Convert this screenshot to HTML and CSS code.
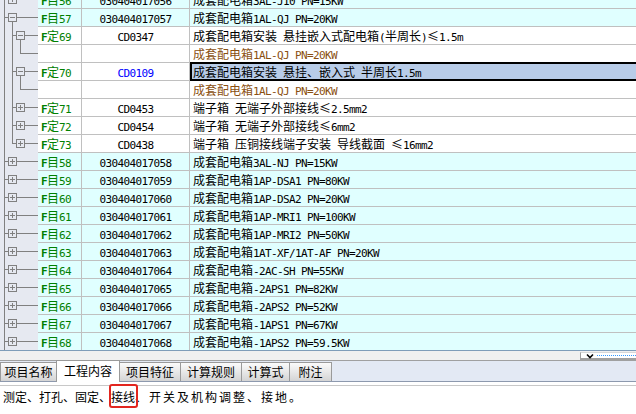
FILE: index.html
```html
<!DOCTYPE html>
<html>
<head>
<meta charset="utf-8">
<link rel="stylesheet" href="styles.css">
</head>
<body>
<svg class="defs" width="0" height="0" aria-hidden="true">
  <defs>
    <symbol id="tA" viewBox="0 0 38 18"><rect x="8.5" y="4.5" width="8" height="8"/><path d="M4.5 0V18M4.5 8.5H8.5M16.5 8.5H38M10 8.5H15M12.5 6V11"/></symbol>
    <symbol id="tB" viewBox="0 0 38 18"><rect x="8.5" y="4.5" width="8" height="8"/><path d="M4.5 0V18M4.5 8.5H8.5M16.5 8.5H38M10 8.5H15M12.5 12.5V18"/></symbol>
    <symbol id="tC" viewBox="0 0 38 18"><rect x="16.5" y="4.5" width="8" height="8"/><path d="M4.5 0V18M12.5 0V18M12.5 8.5H16.5M24.5 8.5H38M18 8.5H23M20.5 12.5V18"/></symbol>
    <symbol id="tD" viewBox="0 0 38 18"><path d="M4.5 0V18M12.5 0V18M20.5 0V8.5H38"/></symbol>
    <symbol id="tE" viewBox="0 0 38 18"><rect x="16.5" y="4.5" width="8" height="8"/><path d="M4.5 0V18M12.5 0V18M12.5 8.5H16.5M24.5 8.5H38M18 8.5H23M20.5 6V11"/></symbol>
    <symbol id="tF" viewBox="0 0 38 18"><rect x="16.5" y="4.5" width="8" height="8"/><path d="M4.5 0V18M12.5 0V8.5H16.5M24.5 8.5H38M18 8.5H23M20.5 6V11"/></symbol>
  </defs>
</svg>

<div class="grid">
  <div class="rows">
    <div class="row main">
      <div class="tree"><svg><use href="#tA"/></svg></div>
      <div class="c lbl"><span class="a b">F</span>目<span class="a">56</span></div>
      <div class="c num"><span class="a">030404017056</span></div>
      <div class="c desc">成套配电箱<span class="a">3AL-J10 PN=15KW</span></div>
    </div>
    <div class="row main">
      <div class="tree"><svg><use href="#tB"/></svg></div>
      <div class="c lbl"><span class="a b">F</span>目<span class="a">57</span></div>
      <div class="c num"><span class="a">030404017057</span></div>
      <div class="c desc">成套配电箱<span class="a">1AL-QJ PN=20KW</span></div>
    </div>
    <div class="row">
      <div class="tree"><svg><use href="#tC"/></svg></div>
      <div class="c lbl"><span class="a b">F</span>定<span class="a">69</span></div>
      <div class="c num"><span class="a">CD0347</span></div>
      <div class="c desc">成套配电箱安装<span class="a"> </span>悬挂嵌入式配电箱<span class="a">(</span>半周长<span class="a">)</span><span class="le">≤</span><span class="a">1.5m</span></div>
    </div>
    <div class="row">
      <div class="tree"><svg><use href="#tD"/></svg></div>
      <div class="c lbl"></div>
      <div class="c num"></div>
      <div class="c desc sub">成套配电箱<span class="a">1AL-QJ PN=20KW</span></div>
    </div>
    <div class="row">
      <div class="tree"><svg><use href="#tC"/></svg></div>
      <div class="c lbl"><span class="a b">F</span>定<span class="a">70</span></div>
      <div class="c num blue"><span class="a">CD0109</span></div>
      <div class="c desc sel">成套配电箱安装<span class="a"> </span>悬挂、嵌入式<span class="a"> </span>半周长<span class="a">1.5m</span></div>
    </div>
    <div class="row">
      <div class="tree"><svg><use href="#tD"/></svg></div>
      <div class="c lbl"></div>
      <div class="c num"></div>
      <div class="c desc sub">成套配电箱<span class="a">1AL-QJ PN=20KW</span></div>
    </div>
    <div class="row">
      <div class="tree"><svg><use href="#tE"/></svg></div>
      <div class="c lbl"><span class="a b">F</span>定<span class="a">71</span></div>
      <div class="c num"><span class="a">CD0453</span></div>
      <div class="c desc">端子箱<span class="a"> </span>无端子外部接线<span class="le">≤</span><span class="a">2.5mm2</span></div>
    </div>
    <div class="row">
      <div class="tree"><svg><use href="#tE"/></svg></div>
      <div class="c lbl"><span class="a b">F</span>定<span class="a">72</span></div>
      <div class="c num"><span class="a">CD0454</span></div>
      <div class="c desc">端子箱<span class="a"> </span>无端子外部接线<span class="le">≤</span><span class="a">6mm2</span></div>
    </div>
    <div class="row">
      <div class="tree"><svg><use href="#tF"/></svg></div>
      <div class="c lbl"><span class="a b">F</span>定<span class="a">73</span></div>
      <div class="c num"><span class="a">CD0438</span></div>
      <div class="c desc">端子箱<span class="a"> </span>压铜接线端子安装<span class="a"> </span>导线截面<span class="a"> </span><span class="le">≤</span><span class="a">16mm2</span></div>
    </div>
    <div class="row main">
      <div class="tree"><svg><use href="#tA"/></svg></div>
      <div class="c lbl"><span class="a b">F</span>目<span class="a">58</span></div>
      <div class="c num"><span class="a">030404017058</span></div>
      <div class="c desc">成套配电箱<span class="a">3AL-NJ PN=15KW</span></div>
    </div>
    <div class="row main">
      <div class="tree"><svg><use href="#tA"/></svg></div>
      <div class="c lbl"><span class="a b">F</span>目<span class="a">59</span></div>
      <div class="c num"><span class="a">030404017059</span></div>
      <div class="c desc">成套配电箱<span class="a">1AP-DSA1 PN=80KW</span></div>
    </div>
    <div class="row main">
      <div class="tree"><svg><use href="#tA"/></svg></div>
      <div class="c lbl"><span class="a b">F</span>目<span class="a">60</span></div>
      <div class="c num"><span class="a">030404017060</span></div>
      <div class="c desc">成套配电箱<span class="a">1AP-DSA2 PN=20KW</span></div>
    </div>
    <div class="row main">
      <div class="tree"><svg><use href="#tA"/></svg></div>
      <div class="c lbl"><span class="a b">F</span>目<span class="a">61</span></div>
      <div class="c num"><span class="a">030404017061</span></div>
      <div class="c desc">成套配电箱<span class="a">1AP-MRI1 PN=100KW</span></div>
    </div>
    <div class="row main">
      <div class="tree"><svg><use href="#tA"/></svg></div>
      <div class="c lbl"><span class="a b">F</span>目<span class="a">62</span></div>
      <div class="c num"><span class="a">030404017062</span></div>
      <div class="c desc">成套配电箱<span class="a">1AP-MRI2 PN=50KW</span></div>
    </div>
    <div class="row main">
      <div class="tree"><svg><use href="#tA"/></svg></div>
      <div class="c lbl"><span class="a b">F</span>目<span class="a">63</span></div>
      <div class="c num"><span class="a">030404017063</span></div>
      <div class="c desc">成套配电箱<span class="a">1AT-XF/1AT-AF PN=20KW</span></div>
    </div>
    <div class="row main">
      <div class="tree"><svg><use href="#tA"/></svg></div>
      <div class="c lbl"><span class="a b">F</span>目<span class="a">64</span></div>
      <div class="c num"><span class="a">030404017064</span></div>
      <div class="c desc">成套配电箱<span class="a">-2AC-SH PN=55KW</span></div>
    </div>
    <div class="row main">
      <div class="tree"><svg><use href="#tA"/></svg></div>
      <div class="c lbl"><span class="a b">F</span>目<span class="a">65</span></div>
      <div class="c num"><span class="a">030404017065</span></div>
      <div class="c desc">成套配电箱<span class="a">-2APS1 PN=82KW</span></div>
    </div>
    <div class="row main">
      <div class="tree"><svg><use href="#tA"/></svg></div>
      <div class="c lbl"><span class="a b">F</span>目<span class="a">66</span></div>
      <div class="c num"><span class="a">030404017066</span></div>
      <div class="c desc">成套配电箱<span class="a">-2APS2 PN=52KW</span></div>
    </div>
    <div class="row main">
      <div class="tree"><svg><use href="#tA"/></svg></div>
      <div class="c lbl"><span class="a b">F</span>目<span class="a">67</span></div>
      <div class="c num"><span class="a">030404017067</span></div>
      <div class="c desc">成套配电箱<span class="a">-1APS1 PN=67KW</span></div>
    </div>
    <div class="row main">
      <div class="tree"><svg><use href="#tA"/></svg></div>
      <div class="c lbl"><span class="a b">F</span>目<span class="a">68</span></div>
      <div class="c num"><span class="a">030404017068</span></div>
      <div class="c desc">成套配电箱<span class="a">-1APS2 PN=59.5KW</span></div>
    </div>
  </div>
</div>

<div class="hbar">
  <div class="hscroll">
    <svg class="chev" width="8" height="6" viewBox="0 0 8 6"><path d="M1 1.5L4 4.5L7 1.5"/></svg>
    <div class="dots"></div>
  </div>
</div>

<div class="tabbar">
  <div class="tab w57">项目名称</div>
  <div class="tab on w63">工程内容</div>
  <div class="tab w61">项目特征</div>
  <div class="tab w61">计算规则</div>
  <div class="tab w48">计算式</div>
  <div class="tab w42">附注</div>
</div>

<div class="content">测定、打孔、固定、<span class="mark">接线</span><span class="tail">、开关及机构调整、接地。</span></div>
</body>
</html>
```

FILE: styles.css
```css
* { box-sizing: border-box; }
html, body { margin: 0; padding: 0; }
body {
  width: 636px;
  height: 414px;
  overflow: hidden;
  background: #ffffff;
  color: #000000;
  font-family: "Noto Sans CJK SC", "Liberation Sans", sans-serif;
  font-size: 12px;
}
.defs { position: absolute; width: 0; height: 0; overflow: hidden; }
.defs symbol rect { fill: #e6e9f1; stroke: #808080; stroke-width: 1; }
.defs symbol path { fill: none; stroke: #808080; stroke-width: 1; }

.grid {
  height: 351px;
  border-bottom: 1px solid #7f9db9;
  overflow: hidden;
}
.rows { margin-top: -9px; }
.row {
  display: grid;
  grid-template-columns: 38px 44px 108px 1fr;
  height: 18px;
}
.tree { background: #e6e9f1; height: 18px; }
.tree svg { display: block; width: 38px; height: 18px; shape-rendering: crispEdges; }
.c {
  height: 18px;
  border-bottom: 1px solid #c0c0c0;
  line-height: 17px;
  white-space: nowrap;
  overflow: hidden;
  background: #ffffff;
}
.main .c { background: #e0ffff; }
.lbl { border-right: 1px solid #c0c0c0; padding-left: 3px; color: #008000; }
.num { border-right: 1px solid #c0c0c0; text-align: center; }
.desc { padding-left: 3px; }
.a {
  font-family: "DejaVu Sans Mono", "Liberation Mono", monospace;
  font-size: 11px;
  letter-spacing: -0.62px;
  white-space: pre;
}
.b { font-weight: bold; }
.le { display: inline-block; width: 12px; text-align: center; }
.sub { color: #8a4f10; }
.blue { color: #0000ff; }
.c.sel { position: relative; background: #b8cce8; overflow: visible; }
.sel::after {
  content: "";
  position: absolute;
  left: 0; right: -2px; top: -1px; bottom: -1px;
  border: 2px solid #000000;
}

.hbar {
  height: 9px;
  background: #f0f0f0;
  display: flex;
  justify-content: flex-end;
}
.hscroll {
  width: 56px;
  height: 8px;
  margin-top: 1px;
  background: #ffffff;
  border-left: 1px solid #a0a0a0;
  border-top: 1px solid #d8d8d8;
  border-bottom: 2px solid #a0a0a0;
  display: flex;
  align-items: center;
  padding-left: 5px;
  gap: 3px;
}
.chev { display: block; flex: none; }
.chev path { fill: none; stroke: #000; stroke-width: 1.6; }
.dots { flex: 1; border-top: 1px dotted #3399ff; height: 0; }

.tabbar {
  height: 22px;
  border-top: 1px solid #a0a0a0;
  border-bottom: 1px solid #8d99ae;
  background: #e3e9f4;
  display: flex;
  align-items: flex-end;
}
.tab {
  height: 19px;
  border: 1px solid #9a9a9a;
  border-bottom: none;
  margin-right: -1px;
  background: linear-gradient(#fbfbfb, #d4d4d4);
  text-align: center;
  line-height: 18px;
  font-size: 12px;
  flex: none;
}
.tab.on {
  height: 22px;
  margin-bottom: -1px;
  background: #ffffff;
  line-height: 20px;
  position: relative;
}
.w57 { width: 57px; }
.w63 { width: 64px; }
.w61 { width: 62px; }
.w48 { width: 49px; }
.w42 { width: 43px; }

.content {
  margin-top: 3px;
  border-top: 1px solid #c8c8c8;
  padding: 1px 3px 0;
  line-height: 20px;
  white-space: nowrap;
}
.mark { position: relative; }
.mark::after {
  content: "";
  position: absolute;
  left: -2px; right: -3px; top: -4px; bottom: -3px;
  border: 2px solid #e2261f;
  border-radius: 3px;
}
.tail { letter-spacing: 2px; }
```
